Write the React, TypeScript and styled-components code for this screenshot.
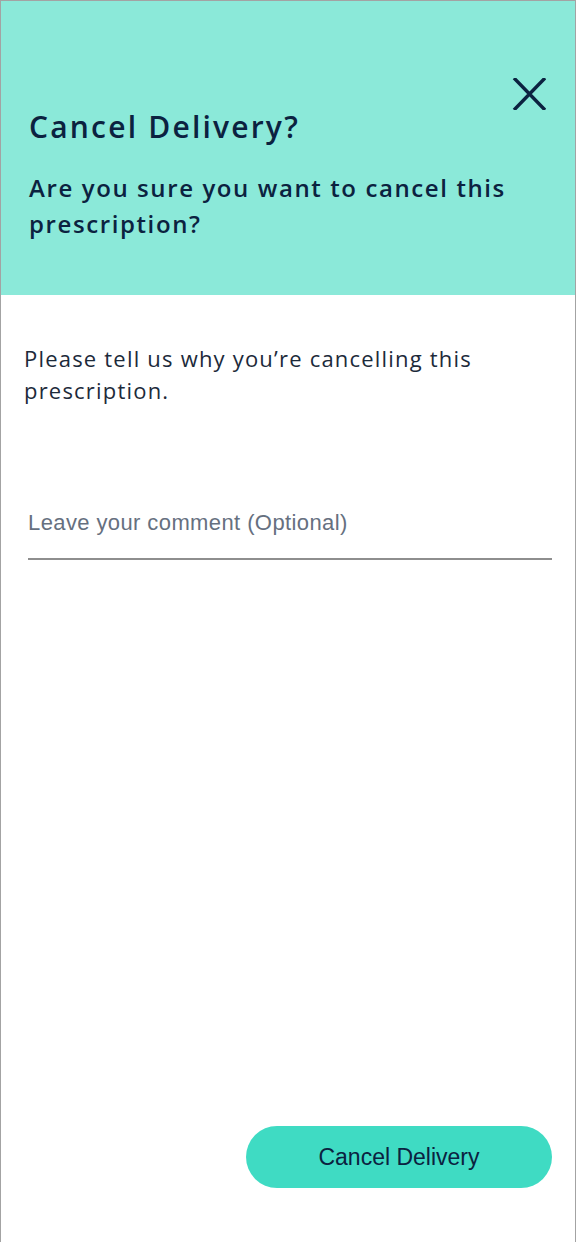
import React from "react";
import styled, { createGlobalStyle } from "styled-components";

const Global = createGlobalStyle`
  html, body { margin: 0; padding: 0; background: #ffffff; }
  * { box-sizing: border-box; }
`;

const Frame = styled.div`
  width: 576px;
  height: 1242px;
  border: 1px solid #a3a3a3;
  border-bottom: none;
  display: flex;
  flex-direction: column;
  background: #ffffff;
  font-family: "Open Sans", "Noto Sans", sans-serif;
  color: #0b2240;
`;

const Header = styled.header`
  background: #8be9d9;
  height: 294px;
  padding: 77px 29px 0 28px;
  display: flex;
  flex-direction: column;
`;

const CloseRow = styled.div`
  display: flex;
  justify-content: flex-end;
`;

const CloseButton = styled.button`
  width: 34px;
  height: 32px;
  padding: 0;
  border: none;
  background: transparent;
  display: flex;
  align-items: center;
  justify-content: center;
  cursor: pointer;
  color: #0b2240;
`;

const Title = styled.h1`
  margin: -1px 0 0;
  font-size: 30px;
  font-weight: 600;
  line-height: 36px;
  letter-spacing: 2.2px;
`;

const Subtitle = styled.h2`
  margin: 25px 0 0;
  font-size: 24px;
  font-weight: 600;
  line-height: 36px;
  letter-spacing: 1.6px;
`;

const Body = styled.main`
  flex: 1;
  display: flex;
  flex-direction: column;
  padding: 47px 23px 54px 23px;
`;

const Prompt = styled.p`
  margin: 0;
  font-size: 22px;
  font-weight: 400;
  line-height: 32px;
  color: #1c2a3a;
  letter-spacing: 1.2px;
`;

const CommentInput = styled.input`
  margin: 98px 0 0 4px;
  height: 56px;
  border: none;
  border-bottom: 2px solid #8e8e8e;
  padding: 0 0 16px;
  font-family: "Liberation Sans", Arial, sans-serif;
  font-size: 22px;
  letter-spacing: 0.4px;
  color: #1c2a3a;
  background: transparent;
  outline: none;
  &::placeholder {
    color: #66707f;
  }
`;

const Spacer = styled.div`
  flex: 1;
`;

const Actions = styled.div`
  display: flex;
  justify-content: flex-end;
`;

const PrimaryButton = styled.button`
  width: 306px;
  height: 62px;
  border: none;
  border-radius: 31px;
  background: #3fdbc3;
  color: #0b2240;
  font-family: "Liberation Sans", Arial, sans-serif;
  font-size: 23px;
  cursor: pointer;
`;

export default function App() {
  return (
    <>
      <Global />
      <Frame>
        <Header>
          <CloseRow>
            <CloseButton aria-label="Close">
              <svg width="34" height="32" viewBox="0 0 34 32" fill="none">
                <path d="M2 0L33 32M33 0L2 32" stroke="currentColor" strokeWidth="3.4" />
              </svg>
            </CloseButton>
          </CloseRow>
          <Title>Cancel Delivery?</Title>
          <Subtitle>Are you sure you want to cancel this prescription?</Subtitle>
        </Header>
        <Body>
          <Prompt>Please tell us why you’re cancelling this prescription.</Prompt>
          <CommentInput placeholder="Leave your comment (Optional)" />
          <Spacer />
          <Actions>
            <PrimaryButton>Cancel Delivery</PrimaryButton>
          </Actions>
        </Body>
      </Frame>
    </>
  );
}
